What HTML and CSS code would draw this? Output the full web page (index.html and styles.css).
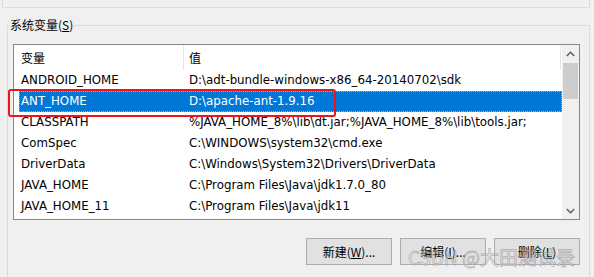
FILE: index.html
```html
<!DOCTYPE html>
<html lang="zh-CN">
<head>
  <meta charset="UTF-8">
  <title>环境变量</title>
  <link rel="stylesheet" href="styles.css">
</head>
<body>
  <div class="dialog">
    <div class="user-group"></div>
    <fieldset class="group">
      <legend>系统变量(<u>S</u>)</legend>
      <div class="listbox">
        <div class="list">
          <div class="header">
            <span class="col-name">变量</span>
            <span class="col-value">值</span>
          </div>
          <div class="row"><span class="col-name">ANDROID_HOME</span><span class="col-value">D:\adt-bundle-windows-x86_64-20140702\sdk</span></div>
          <div class="row selected"><span class="col-name">ANT_HOME</span><span class="col-value">D:\apache-ant-1.9.16</span></div>
          <div class="row"><span class="col-name">CLASSPATH</span><span class="col-value">%JAVA_HOME_8%\lib\dt.jar;%JAVA_HOME_8%\lib\tools.jar;</span></div>
          <div class="row"><span class="col-name">ComSpec</span><span class="col-value">C:\WINDOWS\system32\cmd.exe</span></div>
          <div class="row"><span class="col-name">DriverData</span><span class="col-value">C:\Windows\System32\Drivers\DriverData</span></div>
          <div class="row"><span class="col-name">JAVA_HOME</span><span class="col-value">C:\Program Files\Java\jdk1.7.0_80</span></div>
          <div class="row"><span class="col-name">JAVA_HOME_11</span><span class="col-value">C:\Program Files\Java\jdk11</span></div>
        </div>
        <div class="scrollbar">
          <div class="arrow">
            <svg width="9" height="6" viewBox="0 0 9 6"><polyline points="0.8,5 4.5,1.3 8.2,5" fill="none" stroke="#606060" stroke-width="1.6"/></svg>
          </div>
          <div class="track"><div class="thumb"></div></div>
          <div class="arrow">
            <svg width="9" height="6" viewBox="0 0 9 6"><polyline points="0.8,1 4.5,4.7 8.2,1" fill="none" stroke="#606060" stroke-width="1.6"/></svg>
          </div>
        </div>
        <div class="mark"></div>
      </div>
      <div class="buttons">
        <button>新建(<u>W</u>)...</button>
        <button>编辑(<u>I</u>)...</button>
        <button>删除(<u>L</u>)</button>
      </div>
    </fieldset>
    <div class="watermark">CSDN @大田测试录</div>
  </div>
</body>
</html>
```

FILE: styles.css
```css
body {
  margin: 0;
  background-color: #f0f0f0;
  font-family: "DejaVu Sans", "Noto Sans CJK SC", sans-serif;
  font-size: 11.8px;
  color: #000;
  overflow: hidden;
}
.dialog {
  position: relative;
  height: 277px;
}
.user-group {
  height: 7px;
  margin: 0 4px 0 2px;
  border: 1px solid #dcdcdc;
  border-top: none;
}
.group {
  margin: 9px 4px 0 7px;
  padding: 0 5px 20px 5px;
  border: 1px solid #dcdcdc;
}
.group legend {
  margin-left: -4px;
  padding: 0 1px;
  font-family: "Noto Sans CJK SC", sans-serif;
  font-size: 12px;
  line-height: 16px;
  color: #000;
}
.listbox {
  position: relative;
  display: flex;
  margin-top: 11px;
  width: 567px;
  height: 176px;
  box-sizing: border-box;
  border: 1px solid #828790;
  background: #fff;
}
.list {
  width: 548px;
}
.header {
  display: flex;
  height: 25px;
  width: 547px;
  line-height: 25px;
  font-family: "Noto Sans CJK SC", sans-serif;
  font-size: 12px;
}
.header .col-name {
  width: 170px;
  box-sizing: border-box;
  padding-left: 7px;
  border-right: 1px solid #e5e5e5;
}
.header .col-value {
  flex: 1;
  padding-left: 5px;
  border-right: 1px solid #e5e5e5;
}
.row {
  display: flex;
  height: 21px;
  line-height: 21px;
  margin-left: 5px;
  white-space: nowrap;
}
.row .col-name {
  width: 164px;
  box-sizing: border-box;
  padding-left: 2px;
}
.row .col-value {
  flex: 1;
  padding-left: 6px;
}
.row.selected {
  background: #0078d7;
  color: #fff;
  outline: 1px dotted #e3a25a;
  outline-offset: -1px;
}
.scrollbar {
  display: flex;
  flex-direction: column;
  width: 17px;
  background: #f0f0f0;
}
.arrow {
  height: 17px;
  display: flex;
  align-items: center;
  justify-content: center;
}
.track {
  flex: 1;
  padding: 1px 1px 0 1px;
}
.thumb {
  height: 36px;
  background: #cdcdcd;
}
.mark {
  position: absolute;
  left: -6px;
  top: 44px;
  width: 328px;
  height: 28px;
  box-sizing: border-box;
  border: 2.5px solid #f0141a;
  border-radius: 3px;
}
.buttons {
  display: flex;
  justify-content: flex-end;
  gap: 8px;
  width: 567px;
  margin-top: 18px;
}
.buttons button {
  width: 86px;
  height: 27px;
  padding: 0;
  background: #e1e1e1;
  border: 1px solid #adadad;
  border-radius: 0;
  font-family: "Noto Sans CJK SC", sans-serif;
  font-size: 12px;
  color: #000;
}
.watermark {
  position: absolute;
  left: 408px;
  top: 243px;
  font-family: "Noto Sans CJK SC", sans-serif;
  font-size: 19px;
  color: rgba(255, 255, 255, 0.4);
  -webkit-text-stroke: 0.8px rgba(130, 130, 130, 0.55);
  white-space: nowrap;
}
```
